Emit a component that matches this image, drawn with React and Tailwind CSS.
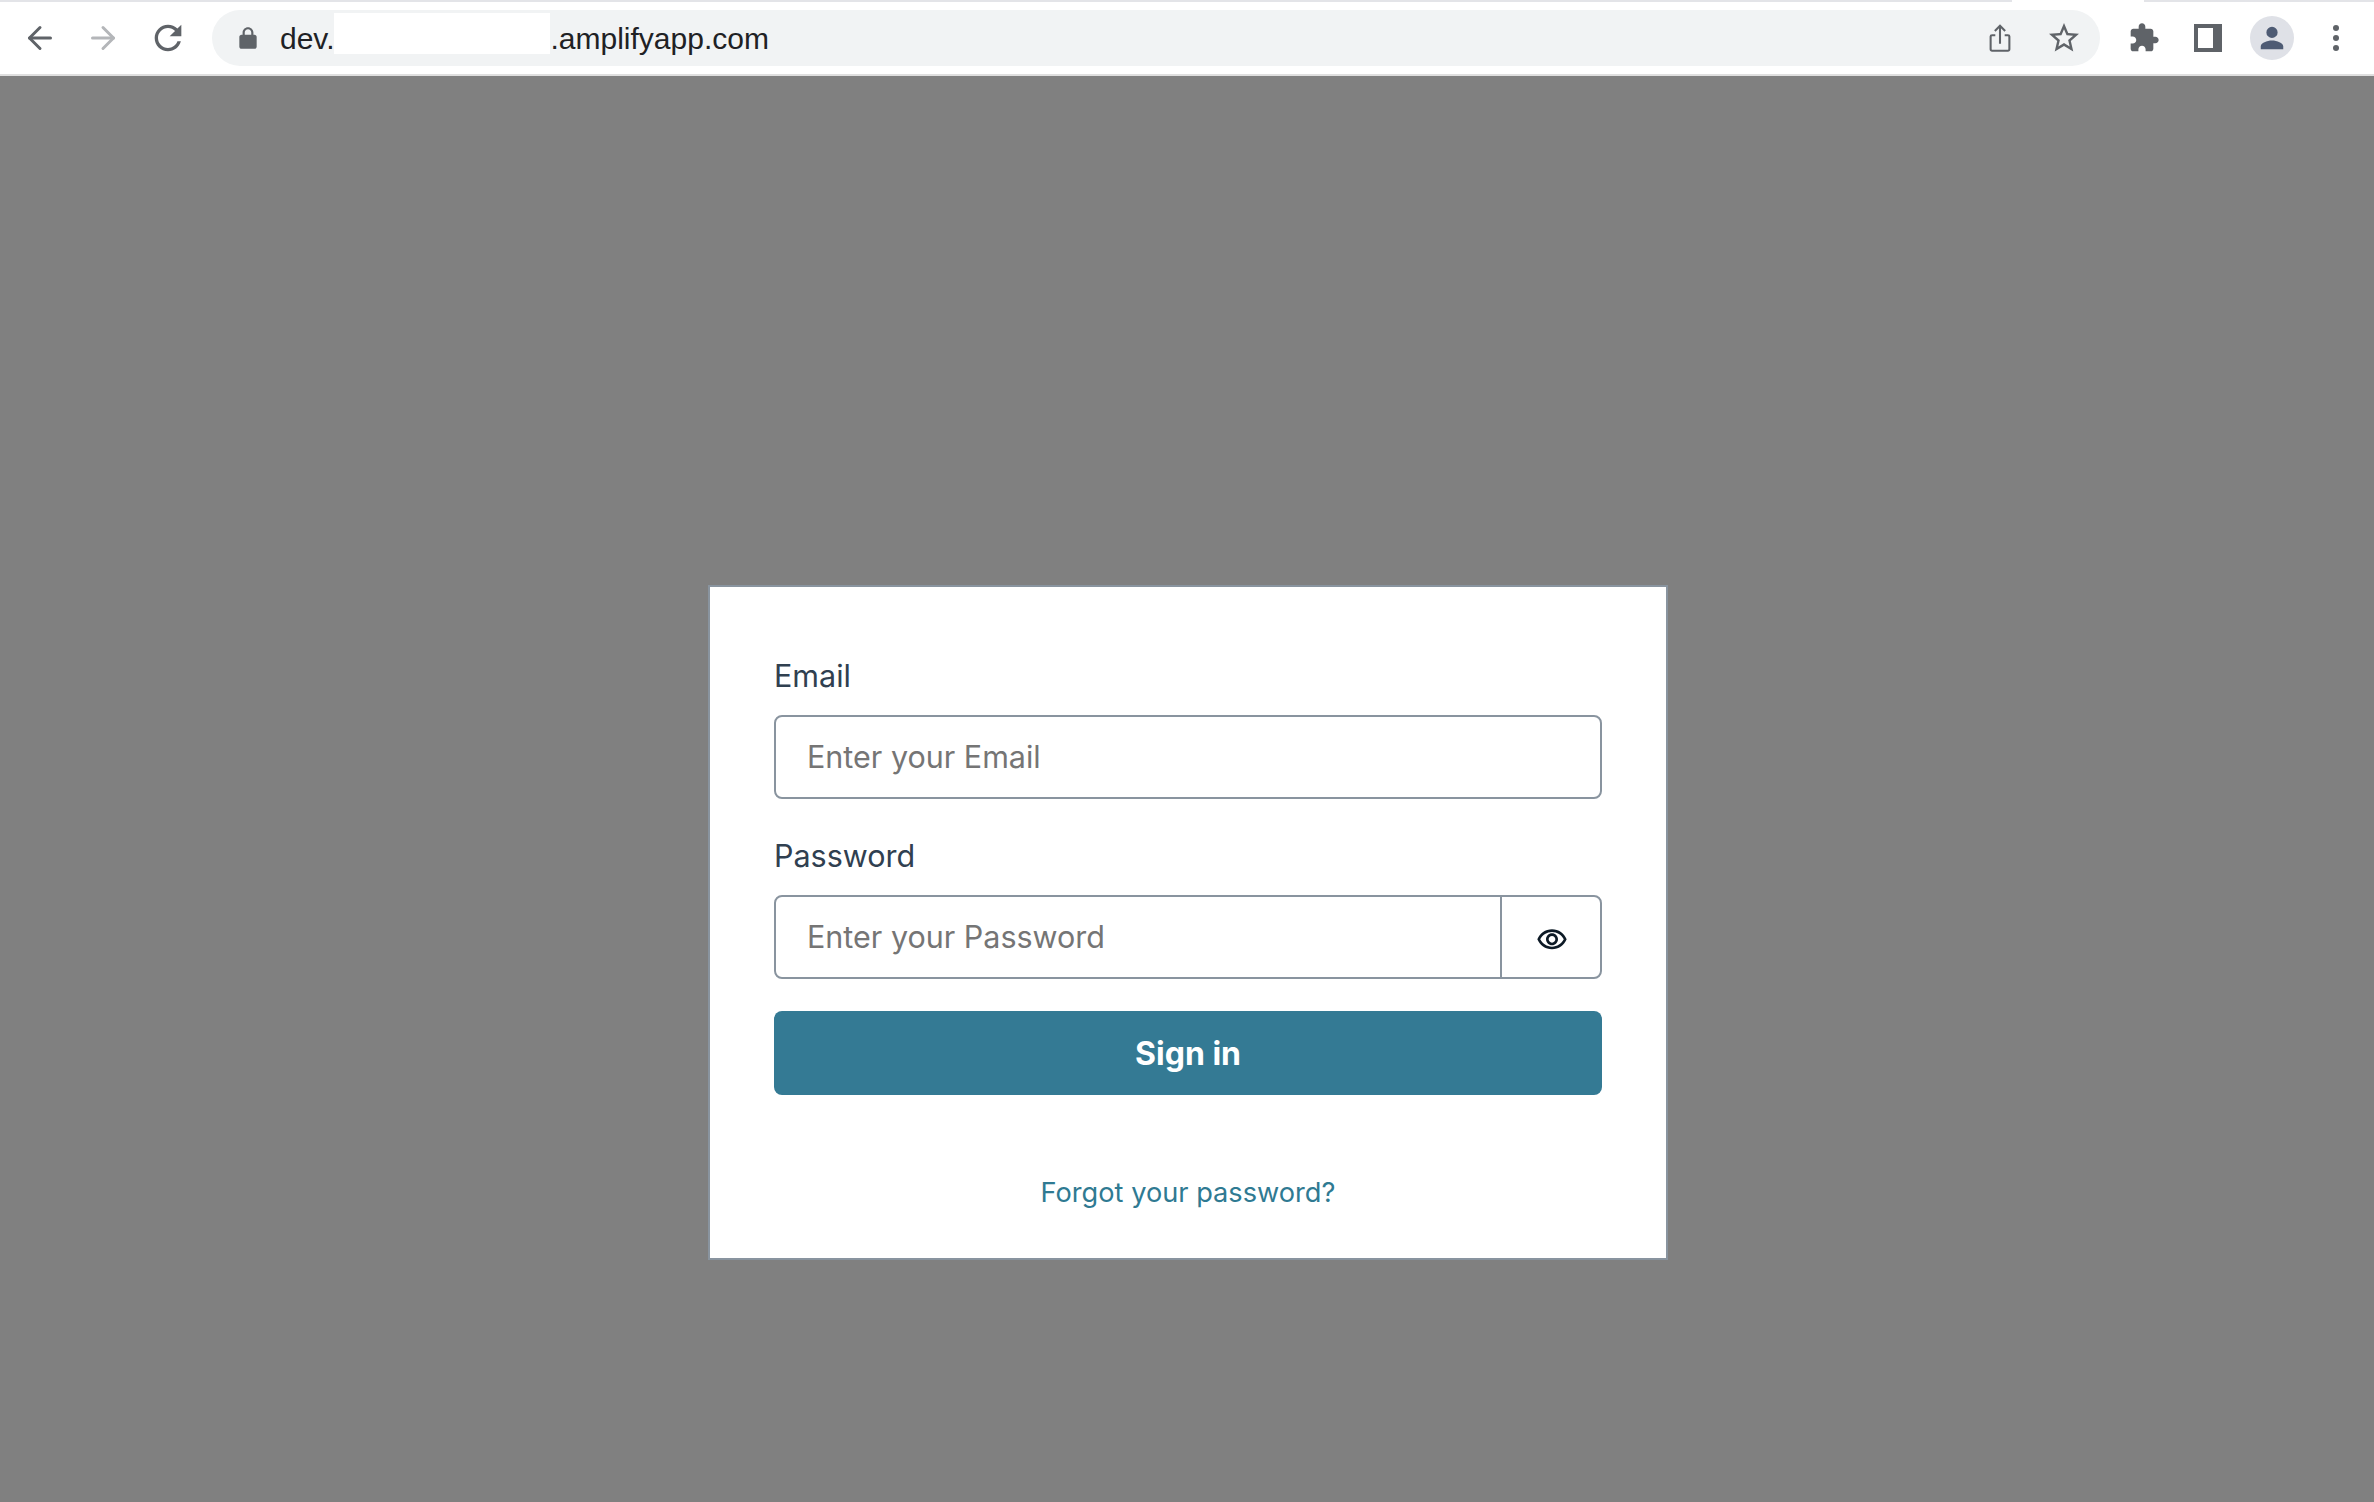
import React from 'react';
import { ArrowLeft, ArrowRight } from 'lucide-react';

const Chrome = () => (
  <div className="h-[76px] bg-white border-t-2 border-b-2 border-t-[#e3e4e8] border-b-[#dfdfdf] relative flex items-center font-['Liberation_Sans',sans-serif]">
    <div className="absolute left-[2012px] top-[-2px] w-[132px] h-[2px] bg-white" />
    <div className="w-[212px] flex items-center pl-[22px] gap-[27px] shrink-0">
      <ArrowLeft className="w-9 h-9 text-[#5f6368]" strokeWidth={2} />
      <ArrowRight className="w-9 h-9 text-[#b4b6b9]" strokeWidth={2} />
      <svg viewBox="0 0 24 24" className="w-10 h-10 text-[#5f6368]" fill="currentColor">
        <path d="M17.650 6.350C16.200 4.900 14.210 4 12 4c-4.420 0-7.990 3.580-7.990 8s3.570 8 7.990 8c3.730 0 6.840-2.550 7.730-6h-2.080c-.82 2.330-3.040 4-5.650 4-3.310 0-6-2.690-6-6s2.690-6 6-6c1.660 0 3.140.69 4.220 1.780L13 11h7V4l-2.350 2.350z" />
      </svg>
    </div>
    <div className="w-[1888px] h-14 rounded-full bg-[#f1f3f4] flex items-center justify-between shrink-0 pl-[23px] pr-[18px]">
      <div className="flex items-center">
        <svg viewBox="0 0 24 24" className="w-[26px] h-[26px] text-[#5f6368]" fill="currentColor">
          <path d="M18 9h-1V7c0-2.760-2.240-5-5-5S7 4.240 7 7v2H6c-1.100 0-2 .9-2 2v9c0 1.100.9 2 2 2h12c1.100 0 2-.9 2-2v-9c0-1.100-.9-2-2-2zM9 9V7c0-1.660 1.340-3 3-3s3 1.340 3 3v2H9z" />
        </svg>
        <span className="ml-[19px] text-[30px] text-[#202124]">dev.</span>
        <span className="h-[41px] w-[216px] mb-[10px] bg-white" />
        <span className="text-[30px] text-[#202124]">.amplifyapp.com</span>
      </div>
      <div className="flex items-center gap-[34px]">
        <svg viewBox="0 0 24 32" className="w-6 h-[30px] text-[#5f6368]" fill="none" stroke="currentColor" strokeWidth="2.2">
          <path d="M12 22V3M6.500 8.500 12 3l5.500 5.500M7 13H3.500a1.500 1.500 0 0 0-1.500 1.500V28a1.500 1.500 0 0 0 1.500 1.500h17a1.500 1.500 0 0 0 1.500-1.500V14.500a1.500 1.500 0 0 0-1.500-1.500H17" />
        </svg>
        <svg viewBox="0 0 24 24" className="w-9 h-9 text-[#5f6368]" fill="currentColor">
          <path d="M22 9.240l-7.190-.62L12 2 9.190 8.630 2 9.240l5.460 4.730L5.820 21 12 17.270 18.180 21l-1.630-7.030L22 9.240zM12 15.400l-3.760 2.270 1-4.280-3.320-2.880 4.380-.38L12 6.100l1.710 4.040 4.380.38-3.320 2.880 1 4.280L12 15.400z" />
        </svg>
      </div>
    </div>
    <div className="flex items-center pl-[28px]">
      <svg viewBox="0 0 24 24" className="w-8 h-8 text-[#5f6368]" fill="currentColor">
        <path d="M20.500 11H19V7c0-1.100-.9-2-2-2h-4V3.500C13 2.120 11.880 1 10.500 1S8 2.120 8 3.500V5H4c-1.100 0-1.990.9-1.990 2v3.800H3.500c1.490 0 2.700 1.210 2.700 2.700s-1.210 2.700-2.700 2.700H2V20c0 1.100.9 2 2 2h3.800v-1.500c0-1.490 1.210-2.700 2.700-2.700 1.490 0 2.700 1.210 2.700 2.700V22H17c1.100 0 2-.9 2-2v-4h1.500c1.380 0 2.500-1.120 2.500-2.500S21.880 11 20.500 11z" />
      </svg>
      <div className="w-7 h-7 ml-[34px] bg-[#5f6368] flex items-center pl-1 py-1">
        <div className="w-[15px] h-5 bg-white" />
      </div>
      <div className="w-11 h-11 ml-7 rounded-full bg-[#dfe1e7] flex items-center justify-center">
        <svg viewBox="0 0 24 24" className="w-[30px] h-[30px] text-[#4e5b74]" fill="currentColor">
          <path d="M12 12a4.500 4.500 0 1 0 0-9 4.500 4.500 0 0 0 0 9zm0 2c-4 0-9 2-9 4.500V21h18v-2.500c0-2.500-5-4.500-9-4.500z" />
        </svg>
      </div>
      <div className="flex flex-col gap-1 ml-[39px]">
        <span className="w-[6px] h-[6px] rounded-full bg-[#5f6368]" />
        <span className="w-[6px] h-[6px] rounded-full bg-[#5f6368]" />
        <span className="w-[6px] h-[6px] rounded-full bg-[#5f6368]" />
      </div>
    </div>
  </div>
);

const Field = ({ label, placeholder, children }) => (
  <div className="flex flex-col gap-[15px]">
    <label className="text-[30.5px] leading-[49px] text-[#304050]">{label}</label>
    <div className="flex h-[84px]">
      <input
        placeholder={placeholder}
        className={`flex-1 min-w-0 pl-[31px] pr-[30px] text-[30.5px] border-2 border-[#89949f] placeholder:text-[#757575] outline-none ${children ? 'rounded-l-[8px]' : 'rounded-[8px]'}`}
      />
      {children}
    </div>
  </div>
);

export default function App() {
  return (
    <div className="min-h-screen flex flex-col bg-[#808080] font-['Inter',sans-serif]">
      <Chrome />
      <div className="flex justify-center pt-[509px] pl-[2px]">
        <div className="w-[960px] bg-white border-2 border-[#89949f] px-16 pt-16 pb-[41px] flex flex-col">
          <div className="flex flex-col gap-8">
            <Field label="Email" placeholder="Enter your Email" />
            <Field label="Password" placeholder="Enter your Password">
              <button className="w-[102px] -ml-[2px] pt-[5px] pl-[2px] flex items-center justify-center border-2 border-[#89949f] rounded-r-[8px] text-[#0d1a26]">
                <svg viewBox="0 0 24 24" className="w-8 h-8" fill="currentColor">
                  <path d="M12 6C15.790 6 19.170 8.130 20.820 11.500C19.170 14.870 15.790 17 12 17C8.210 17 4.830 14.870 3.180 11.500C4.830 8.130 8.210 6 12 6ZM12 4C7 4 2.730 7.110 1 11.500C2.730 15.890 7 19 12 19C17 19 21.270 15.890 23 11.500C21.270 7.110 17 4 12 4ZM12 9C13.380 9 14.500 10.120 14.500 11.500C14.500 12.880 13.380 14 12 14C10.620 14 9.500 12.880 9.500 11.500C9.500 10.120 10.620 9 12 9ZM12 7C9.520 7 7.500 9.020 7.500 11.500C7.500 13.980 9.520 16 12 16C14.480 16 16.500 13.980 16.500 11.500C16.500 9.020 14.480 7 12 7Z" />
                </svg>
              </button>
            </Field>
            <button className="h-[84px] pt-[2px] rounded-[8px] bg-[#347a94] text-white text-[32px] font-bold">Sign in</button>
          </div>
          <a className="mt-[74px] text-center text-[27.2px] leading-[48px] text-[#2f7a92]">Forgot your password?</a>
        </div>
      </div>
    </div>
  );
}
